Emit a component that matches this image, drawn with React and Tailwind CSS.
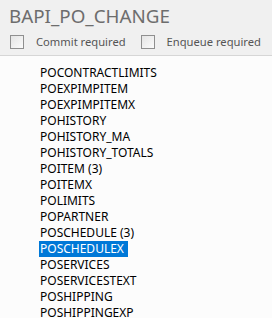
import React from "react";

const items = [
  "POCONTRACTLIMITS",
  "POEXPIMPITEM",
  "POEXPIMPITEMX",
  "POHISTORY",
  "POHISTORY_MA",
  "POHISTORY_TOTALS",
  "POITEM (3)",
  "POITEMX",
  "POLIMITS",
  "POPARTNER",
  "POSCHEDULE (3)",
  "POSCHEDULEX",
  "POSERVICES",
  "POSERVICESTEXT",
  "POSHIPPING",
  "POSHIPPINGEXP",
];

const Check = ({ label }) => (
  <label className="flex shrink-0 items-center gap-[12px] whitespace-nowrap">
    <span className="h-[14px] w-[14px] shrink-0 border border-[#8f8f8f] bg-gradient-to-br from-[#e4e4e4] to-[#fbfbfb]" />
    <span>{label}</span>
  </label>
);

export default function App() {
  return (
    <div className="h-[318px] w-[272px] overflow-hidden bg-white font-['Noto_Sans',sans-serif]">
      <div className="h-[56px] border-b border-[#d6d6d6] bg-[#f0f0f0] pl-[10px] pt-[4px]">
        <h1 className="-ml-px text-[18.8px] leading-[24px] text-[#6d6d6d]">BAPI_PO_CHANGE</h1>
        <div className="mt-[6px] flex gap-[15px] whitespace-nowrap text-[11.2px] leading-[16px] text-[#555]">
          <Check label="Commit required" />
          <Check label="Enqueue required" />
        </div>
      </div>
      <ul className="bg-[#fcfcfc] pl-[39px] pt-[9px] text-[12px] leading-[16px] text-black">
        {items.map((name) => (
          <li key={name} className="h-[16px] whitespace-nowrap">
            <span
              className={
                name === "POSCHEDULEX"
                  ? "inline-block bg-[#0078d7] pl-[1px] pr-[4px] text-white"
                  : "inline-block pl-[1px]"
              }
            >
              {name}
            </span>
          </li>
        ))}
      </ul>
    </div>
  );
}
